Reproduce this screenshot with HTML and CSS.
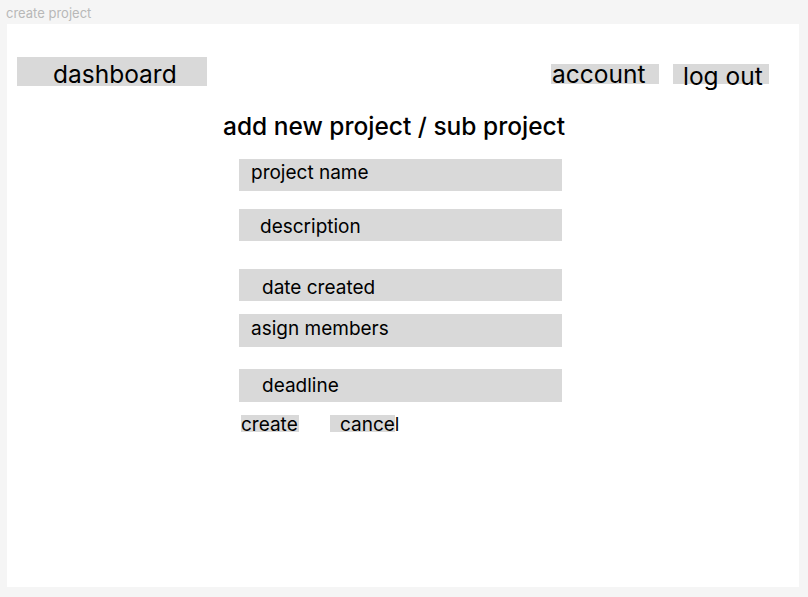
FILE: index.html
```html
<!DOCTYPE html>
<html lang="en">
<head>
<meta charset="utf-8">
<title>create project</title>
<link rel="stylesheet" href="styles.css">
</head>
<body>
<div class="frame-label">create project</div>
<main class="canvas">
  <header class="topbar">
    <div class="nav-dashboard">dashboard</div>
    <div class="nav-right">
      <div class="nav-account">account</div>
      <div class="nav-logout">log out</div>
    </div>
  </header>
  <h1 class="heading">add new project / sub project</h1>
  <form class="form">
    <div class="field field-name">project name</div>
    <div class="field field-desc">description</div>
    <div class="field field-date">date created</div>
    <div class="field field-members">asign members</div>
    <div class="field field-deadline">deadline</div>
    <div class="actions">
      <span class="btn btn-create">create</span>
      <span class="btn btn-cancel">cancel</span>
    </div>
  </form>
</main>
</body>
</html>
```
FILE: styles.css
```css
html, body {
  margin: 0;
  padding: 0;
}
body {
  background: #f5f5f5;
  font-family: Inter, "Noto Sans", sans-serif;
  color: #000;
  width: 808px;
  height: 597px;
  overflow: hidden;
}
.frame-label {
  height: 24px;
  box-sizing: border-box;
  padding: 2px 0 0 6px;
  font-size: 13px;
  line-height: 22px;
  color: #b8b8b8;
}
.canvas {
  display: block;
  margin: 0 9px 0 7px;
  height: 563px;
  background: #fff;
  box-sizing: border-box;
  padding-top: 33px;
}
.topbar {
  display: flex;
  justify-content: space-between;
  align-items: flex-start;
  padding: 0 30px 0 10px;
}
.nav-dashboard {
  width: 190px;
  height: 29px;
  box-sizing: border-box;
  padding: 5px 0 0 36px;
  background: #d9d9d9;
  font-size: 24.5px;
  line-height: 24px;
}
.nav-right {
  display: flex;
  gap: 14px;
  margin-top: 7px;
}
.nav-account {
  width: 108px;
  height: 20px;
  background: #d9d9d9;
  font-size: 24.5px;
  line-height: 20px;
  padding-left: 1px;
  box-sizing: border-box;
  white-space: nowrap;
}
.nav-logout {
  width: 96px;
  height: 20px;
  background: #d9d9d9;
  font-size: 24.5px;
  line-height: 24px;
  padding-left: 10px;
  box-sizing: border-box;
  white-space: nowrap;
}
.heading {
  margin: 26px 0 0 216px;
  font-size: 24.5px;
  font-weight: 500;
  line-height: 29px;
  height: 29px;
  white-space: nowrap;
}
.form {
  margin: 18px 0 0 232px;
  width: 323px;
}
.field {
  height: 32px;
  box-sizing: border-box;
  background: #d9d9d9;
  font-size: 19px;
  line-height: 27px;
  white-space: nowrap;
}
.field-name {
  padding-left: 12px;
}
.field-desc {
  margin-top: 18px;
  padding: 4px 0 0 21px;
}
.field-date {
  margin-top: 28px;
  padding: 5px 0 0 23px;
}
.field-members {
  margin-top: 13px;
  height: 33px;
  padding: 1px 0 0 12px;
}
.field-deadline {
  margin-top: 22px;
  height: 33px;
  padding: 3px 0 0 23px;
}
.actions {
  display: flex;
  margin-top: 13px;
  padding-left: 2px;
}
.btn {
  display: block;
  height: 17px;
  background: #d9d9d9;
  font-size: 19px;
  line-height: 19px;
  white-space: nowrap;
  box-sizing: border-box;
}
.btn-create {
  width: 58px;
}
.btn-cancel {
  width: 65px;
  margin-left: 31px;
  padding-left: 10px;
}
```
